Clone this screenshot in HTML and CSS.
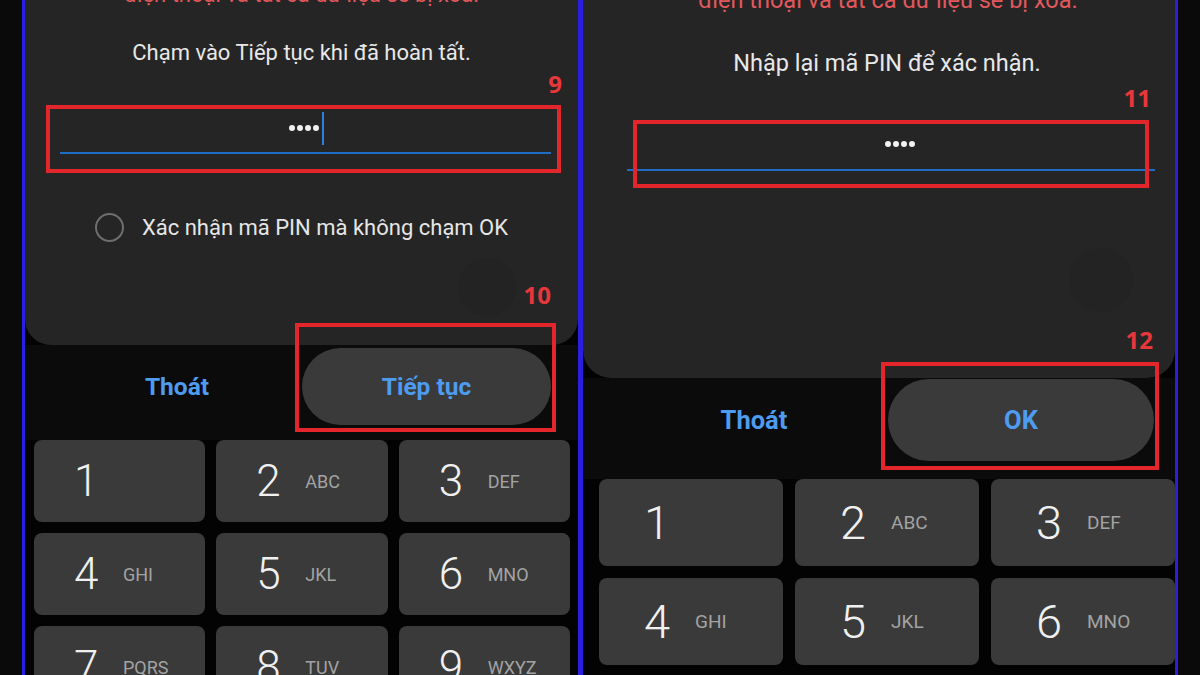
FILE: index.html
```html
<!DOCTYPE html>
<html lang="vi">
<head>
  <meta charset="UTF-8" />
  <meta name="viewport" content="width=device-width, initial-scale=1" />
  <title>Đặt mã PIN</title>
  <link rel="stylesheet" href="styles.css">
</head>
<body>
  <div class="phone phone-a">
    <div class="card">
      <p class="note">điện thoại và tất cả dữ liệu sẽ bị xóa.</p>
      <p class="hint">Chạm vào Tiếp tục khi đã hoàn tất.</p>
      <div class="pin-field">
        <span class="dots"><i></i><i></i><i></i><i></i></span><span class="caret"></span>
        <div class="mark"><span class="mark-num">9</span></div>
      </div>
      <div class="radio-row"><span class="radio"></span>Xác nhận mã PIN mà không chạm OK</div>
      <span class="ripple"></span>
    </div>
    <div class="actions">
      <button class="btn-text">Thoát</button>
      <button class="btn-pill">Tiếp tục
        <span class="mark"><span class="mark-num">10</span></span>
      </button>
    </div>
    <div class="keypad">
      <div class="key"><span class="digit">1</span><span class="letters"></span></div>
      <div class="key"><span class="digit">2</span><span class="letters">ABC</span></div>
      <div class="key"><span class="digit">3</span><span class="letters">DEF</span></div>
      <div class="key"><span class="digit">4</span><span class="letters">GHI</span></div>
      <div class="key"><span class="digit">5</span><span class="letters">JKL</span></div>
      <div class="key"><span class="digit">6</span><span class="letters">MNO</span></div>
      <div class="key"><span class="digit">7</span><span class="letters">PQRS</span></div>
      <div class="key"><span class="digit">8</span><span class="letters">TUV</span></div>
      <div class="key"><span class="digit">9</span><span class="letters">WXYZ</span></div>
    </div>
  </div>

  <div class="phone phone-b">
    <div class="card">
      <p class="note">điện thoại và tất cả dữ liệu sẽ bị xóa.</p>
      <p class="hint">Nhập lại mã PIN để xác nhận.</p>
      <div class="pin-field">
        <span class="dots"><i></i><i></i><i></i><i></i></span>
        <div class="mark"><span class="mark-num">11</span></div>
      </div>
      <span class="ripple"></span>
    </div>
    <div class="actions">
      <button class="btn-text">Thoát</button>
      <button class="btn-pill">OK
        <span class="mark"><span class="mark-num">12</span></span>
      </button>
    </div>
    <div class="keypad">
      <div class="key"><span class="digit">1</span><span class="letters"></span></div>
      <div class="key"><span class="digit">2</span><span class="letters">ABC</span></div>
      <div class="key"><span class="digit">3</span><span class="letters">DEF</span></div>
      <div class="key"><span class="digit">4</span><span class="letters">GHI</span></div>
      <div class="key"><span class="digit">5</span><span class="letters">JKL</span></div>
      <div class="key"><span class="digit">6</span><span class="letters">MNO</span></div>
    </div>
  </div>
</body>
</html>
```

FILE: styles.css
```css
html, body {
  height: 100%;
  margin: 0;
  padding: 0;
}

body {
  background-color: #0a0a0a;
  font-family: Roboto, "Noto Sans", Arial, sans-serif;
  display: flex;
  align-items: flex-start;
  padding-left: 22px;
  overflow: hidden;
}

/* khung điện thoại */
.phone {
  height: 675px;
  background-color: #030303;
  border-left: 3px solid #2a1fe0;
  border-right: 3px solid #2a1fe0;
  display: flex;
  flex-direction: column;
  overflow: hidden;
}

.phone-a { width: 553px; }

.phone-b {
  width: 592px;
  border-left-width: 2px;
}

.card {
  background-color: #252525;
  border-radius: 0 0 26px 26px;
  display: flex;
  flex-direction: column;
  align-items: center;
  position: relative;
  overflow: hidden;
  flex-shrink: 0;
}

.phone-a .card { height: 345px; }
.phone-b .card { height: 378px; border-radius: 0 0 28px 28px; }

.note {
  margin: 0;
  color: #e2585c;
  white-space: nowrap;
}

.phone-a .note { font-size: 22px; line-height: 26px; margin-top: -18px; }
.phone-b .note { font-size: 23.5px; line-height: 28px; margin-top: -14px; margin-left: 18px; }

.hint {
  margin: 0;
  color: #e8e8e8;
  white-space: nowrap;
  position: relative;
  z-index: 1;
}

.phone-a .hint { font-size: 22px; line-height: 26px; margin-top: 32px; }
.phone-b .hint { font-size: 23.5px; line-height: 28px; margin-top: 35px; margin-left: 16px; }

/* ô nhập mã PIN */
.pin-field {
  align-self: stretch;
  height: 40px;
  display: flex;
  justify-content: center;
  align-items: center;
  border-bottom: 2px solid #1f6dc4;
  position: relative;
}

.phone-a .pin-field { margin: 42px 27px 0 35px; padding-bottom: 4px; }
.phone-b .pin-field { margin: 47px 20px 0 44px; padding-bottom: 5px; }

.dots {
  display: flex;
  gap: 2px;
}

.dots i {
  width: 6px;
  height: 6px;
  border-radius: 50%;
  background-color: #f2f2f2;
}

.phone-a .dots { margin-left: 2px; }
.phone-b .dots { margin-left: 18px; }

.caret {
  width: 2px;
  height: 33px;
  margin-left: 3px;
  background-color: #2d7fe0;
}

/* khung đỏ đánh dấu bước */
.mark {
  position: absolute;
  border: 4px solid #e3262b;
  pointer-events: none;
}

.mark-num {
  position: absolute;
  color: #e8373a;
  font-family: "Open Sans", Arial, sans-serif;
  font-weight: 700;
  font-size: 24px;
  line-height: 26px;
  white-space: nowrap;
}

.phone-a .pin-field .mark { left: -14px; right: -10px; top: -3px; bottom: -21px; }
.phone-a .pin-field .mark-num { right: -5px; bottom: calc(100% + 12px); }

.phone-b .pin-field .mark { left: 6px; right: 6px; top: -4px; bottom: -19px; }
.phone-b .pin-field .mark-num { right: -6px; bottom: calc(100% + 13px); }

.radio-row {
  display: flex;
  align-items: center;
  gap: 18px;
  margin-top: 59px;
  height: 28px;
  color: #e6e6e6;
  font-size: 22px;
  white-space: nowrap;
}

.radio {
  width: 25px;
  height: 25px;
  border: 2px solid #6e6e6e;
  border-radius: 50%;
}

.ripple {
  position: absolute;
  width: 58px;
  height: 58px;
  border-radius: 50%;
  background-color: #232323;
}

.phone-a .ripple { left: 433px; top: 258px; }
.phone-b .ripple { left: 486px; top: 248px; width: 64px; height: 64px; }

/* hàng nút */
.actions {
  display: grid;
  background-color: #0b0b0b;
  align-items: center;
  flex-shrink: 0;
}

.phone-a .actions {
  grid-template-columns: 250px 249px;
  padding: 3px 27px 15px 27px;
}

.phone-b .actions {
  grid-template-columns: 268px 266px;
  padding: 1px 21px 18px 37px;
}

.actions button {
  border: none;
  background: none;
  font-family: Roboto, "Noto Sans", Arial, sans-serif;
  font-weight: 700;
  color: #4d9cf0;
  padding: 0;
  cursor: pointer;
}

.phone-a .actions button { font-size: 24.5px; }
.phone-b .actions button { font-size: 25.5px; }

.btn-pill {
  position: relative;
  background-color: #3a3a3a !important;
  border-radius: 999px;
}

.phone-a .btn-pill { height: 77px; }
.phone-b .btn-pill { height: 82px; }

.phone-a .btn-pill .mark { left: -7px; right: -5px; top: -25px; bottom: -7px; }
.phone-a .btn-pill .mark-num { right: 1px; bottom: calc(100% + 19px); }

.phone-b .btn-pill .mark { left: -7px; right: -5px; top: -17px; bottom: -9px; }
.phone-b .btn-pill .mark-num { right: 2px; bottom: calc(100% + 13px); }

/* bàn phím số */
.keypad {
  display: grid;
  grid-template-columns: repeat(3, 1fr);
}

.phone-a .keypad {
  gap: 11px;
  grid-auto-rows: 82px;
  padding: 0 8px 0 9px;
}

.phone-b .keypad {
  gap: 12px;
  grid-auto-rows: 87px;
  padding: 0 0 0 16px;
}

.key {
  background-color: #3a3a3a;
  border-radius: 8px;
  display: flex;
  align-items: center;
}

.phone-a .key { padding-left: 40px; }
.phone-b .key { padding-left: 45px; }

.digit {
  color: #f0f0f0;
  font-weight: 300;
}

.phone-a .digit { width: 49px; font-size: 44px; }
.phone-b .digit { width: 51px; font-size: 47px; }

.letters {
  color: #a3a3a3;
}

.phone-a .letters { font-size: 18px; }
.phone-b .letters { font-size: 19px; }
```
